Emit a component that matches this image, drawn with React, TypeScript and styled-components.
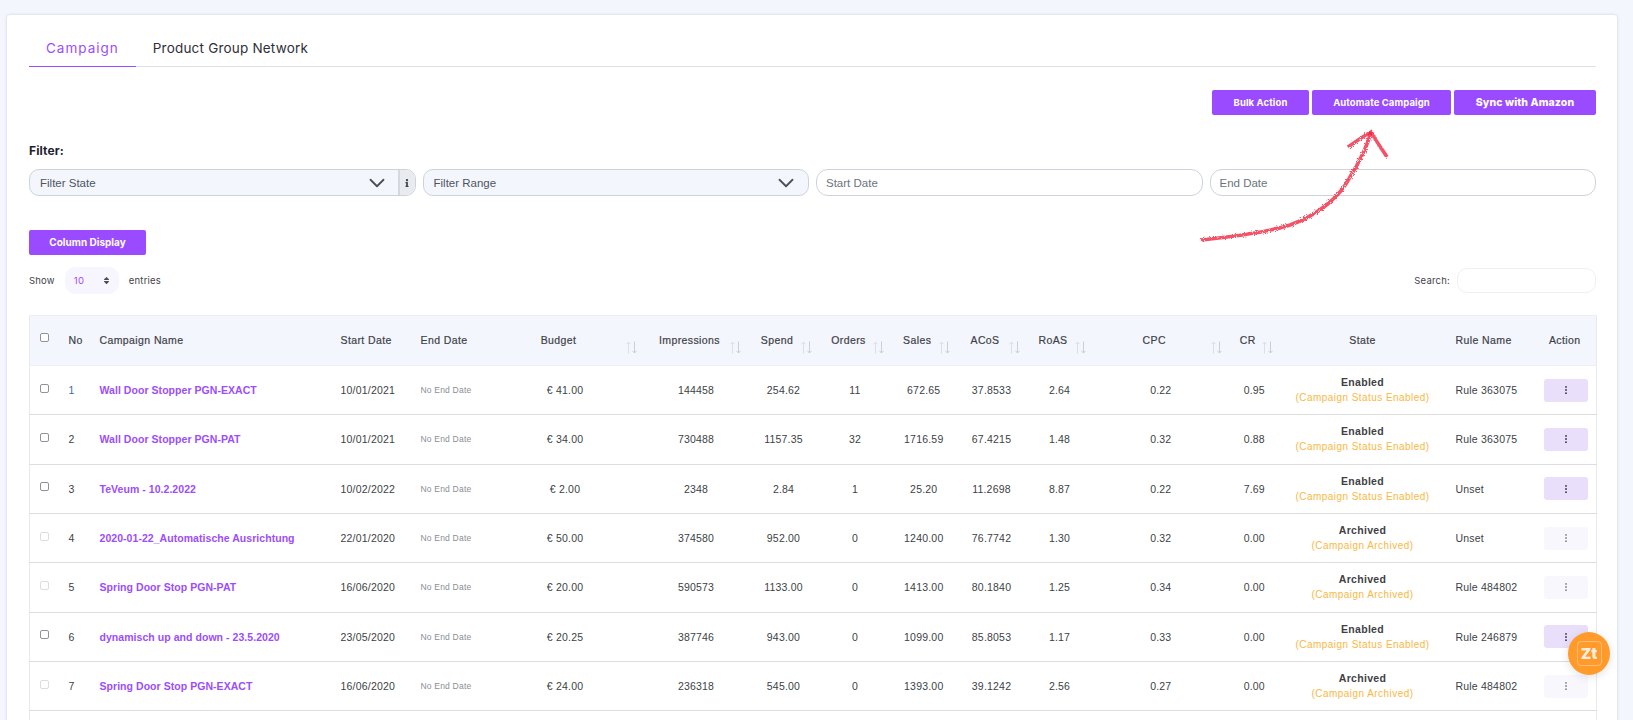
import styled, { createGlobalStyle } from 'styled-components';
import { ChevronDown } from 'lucide-react';
import { FaInfo, FaSort } from 'react-icons/fa';
import { BsThreeDotsVertical } from 'react-icons/bs';

const GlobalStyle = createGlobalStyle`
	html, body {
		margin: 0;
		height: 720px;
		overflow: hidden;
		background: #f4f6fe;
		font-family: 'Inter', 'Liberation Sans', sans-serif;
		color: #3b3f46;
	}
`;

type Campaign = {
	no: number;
	name: string;
	start: string;
	budget: string;
	impressions: string;
	spend: string;
	orders: string;
	sales: string;
	acos: string;
	roas: string;
	cpc: string;
	cr: string;
	archived: boolean;
	rule: string;
};

const campaigns: Campaign[] = [
	{ no: 1, name: 'Wall Door Stopper PGN-EXACT', start: '10/01/2021', budget: '€ 41.00', impressions: '144458', spend: '254.62', orders: '11', sales: '672.65', acos: '37.8533', roas: '2.64', cpc: '0.22', cr: '0.95', archived: false, rule: 'Rule 363075' },
	{ no: 2, name: 'Wall Door Stopper PGN-PAT', start: '10/01/2021', budget: '€ 34.00', impressions: '730488', spend: '1157.35', orders: '32', sales: '1716.59', acos: '67.4215', roas: '1.48', cpc: '0.32', cr: '0.88', archived: false, rule: 'Rule 363075' },
	{ no: 3, name: 'TeVeum - 10.2.2022', start: '10/02/2022', budget: '€ 2.00', impressions: '2348', spend: '2.84', orders: '1', sales: '25.20', acos: '11.2698', roas: '8.87', cpc: '0.22', cr: '7.69', archived: false, rule: 'Unset' },
	{ no: 4, name: '2020-01-22_Automatische Ausrichtung', start: '22/01/2020', budget: '€ 50.00', impressions: '374580', spend: '952.00', orders: '0', sales: '1240.00', acos: '76.7742', roas: '1.30', cpc: '0.32', cr: '0.00', archived: true, rule: 'Unset' },
	{ no: 5, name: 'Spring Door Stop PGN-PAT', start: '16/06/2020', budget: '€ 20.00', impressions: '590573', spend: '1133.00', orders: '0', sales: '1413.00', acos: '80.1840', roas: '1.25', cpc: '0.34', cr: '0.00', archived: true, rule: 'Rule 484802' },
	{ no: 6, name: 'dynamisch up and down - 23.5.2020', start: '23/05/2020', budget: '€ 20.25', impressions: '387746', spend: '943.00', orders: '0', sales: '1099.00', acos: '85.8053', roas: '1.17', cpc: '0.33', cr: '0.00', archived: false, rule: 'Rule 246879' },
	{ no: 7, name: 'Spring Door Stop PGN-EXACT', start: '16/06/2020', budget: '€ 24.00', impressions: '236318', spend: '545.00', orders: '0', sales: '1393.00', acos: '39.1242', roas: '2.56', cpc: '0.27', cr: '0.00', archived: true, rule: 'Rule 484802' },
];

const columnWidths = [29, 31, 241, 80, 75.5, 158, 104, 71, 72, 65.5, 70, 66, 136.5, 50.5, 166, 88, 63];

function SortArrows() {
	return (
		<SortIcon viewBox='0 0 11 13' aria-hidden='true'>
			<path d='M2.5 12.5V1M.5 3.2 2.5 1l2 2.2' stroke='#d9e0e8' />
			<path d='M8.5 .5V12M6.5 9.8 8.5 12l2-2.2' stroke='#c9ced8' />
		</SortIcon>
	);
}

export default function App() {
	return (
		<>
			<GlobalStyle />
			<Page>
				<Card>
					<Tabs>
						<Tab $active>Campaign</Tab>
						<Tab>Product Group Network</Tab>
					</Tabs>

					<ActionBar>
						<ActionButton $width={97}>Bulk Action</ActionButton>
						<ActionButton $width={139}>Automate Campaign</ActionButton>
						<ActionButton $width={142} $heavy>
							Sync with Amazon
						</ActionButton>
					</ActionBar>

					<FilterLabel>Filter:</FilterLabel>
					<FilterGrid>
						<SelectBox>
							<span>Filter State</span>
							<ChevronDown size={26} strokeWidth={1.7} color='#4b4f5c' />
							<InfoAddon>
								<FaInfo size={8} />
							</InfoAddon>
						</SelectBox>
						<SelectBox $tail>
							<span>Filter Range</span>
							<ChevronDown size={26} strokeWidth={1.7} color='#4b4f5c' />
						</SelectBox>
						<DateInput placeholder='Start Date' />
						<DateInput placeholder='End Date' />
					</FilterGrid>

					<ColumnButton>Column Display</ColumnButton>

					<ListControls>
						<LengthControl>
							Show
							<LengthSelect>
								10
								<FaSort size={9} color='#4b4f5c' />
							</LengthSelect>
							entries
						</LengthControl>
						<SearchControl>
							Search:
							<SearchInput />
						</SearchControl>
					</ListControls>

					<Table>
						<colgroup>
							{columnWidths.map((w, idx) => (
								<col key={idx} style={{ width: w }} />
							))}
						</colgroup>
						<thead>
							<tr>
								<Th $align='center'>
									<Check />
								</Th>
								<Th>No</Th>
								<Th>Campaign Name</Th>
								<Th>Start Date</Th>
								<Th>End Date</Th>
								{['Budget', 'Impressions', 'Spend', 'Orders', 'Sales', 'ACoS', 'RoAS', 'CPC', 'CR'].map((h) => (
									<Th key={h} $align='center' $sortable>
										{h}
										<SortArrows />
									</Th>
								))}
								<Th $align='center'>State</Th>
								<Th>Rule Name</Th>
								<Th $align='center'>Action</Th>
							</tr>
						</thead>
						<tbody>
							{campaigns.map((c) => (
								<tr key={c.no}>
									<Td $align='center'>
										<Check disabled={c.archived} />
									</Td>
									<Td $color={c.no === 1 ? '#3a6ea5' : undefined}>{c.no}</Td>
									<NameCell>{c.name}</NameCell>
									<Td>{c.start}</Td>
									<NoEndDate>No End Date</NoEndDate>
									<Td $align='center'>{c.budget}</Td>
									<Td $align='center'>{c.impressions}</Td>
									<Td $align='center'>{c.spend}</Td>
									<Td $align='center'>{c.orders}</Td>
									<Td $align='center'>{c.sales}</Td>
									<Td $align='center'>{c.acos}</Td>
									<Td $align='center'>{c.roas}</Td>
									<Td $align='center'>{c.cpc}</Td>
									<Td $align='center'>{c.cr}</Td>
									<Td $align='center'>
										<StateName>{c.archived ? 'Archived' : 'Enabled'}</StateName>
										<StateNote>{c.archived ? '(Campaign Archived)' : '(Campaign Status Enabled)'}</StateNote>
									</Td>
									<Td>{c.rule}</Td>
									<Td $align='center'>
										<RowMenu $muted={c.archived}>
											<BsThreeDotsVertical size={10} />
										</RowMenu>
									</Td>
								</tr>
							))}
							<tr>
								<Td colSpan={17} />
							</tr>
						</tbody>
					</Table>

					<Annotation viewBox='0 0 220 130' aria-hidden='true'>
						<defs>
							<filter id='rough' x='-10%' y='-10%' width='120%' height='120%'>
								<feTurbulence type='fractalNoise' baseFrequency='0.9' numOctaves='2' seed='4' />
								<feDisplacementMap in='SourceGraphic' scale='3.5' />
							</filter>
						</defs>
						<g filter='url(#rough)' fill='none' stroke='#f0203c' strokeWidth='3.6' strokeOpacity='.78' strokeLinecap='butt'>
							<path d='M11 115C40 112 75 108 100 100C128 90 150 72 160 52C170 36 177 22 181 7' />
							<path d='M158 22C165 17 174 11 181 7C186 16 192 24 197 32' />
						</g>
					</Annotation>
				</Card>
			</Page>
			<ChatBubble>
				<ChatMark>Zt</ChatMark>
			</ChatBubble>
		</>
	);
}

const Page = styled.div`
	padding: 15px 16px 0 7px;
`;

const Card = styled.main`
	position: relative;
	background: #fff;
	padding: 0 21px 0 22px;
	border-radius: 3px 3px 0 0;
	box-shadow: 0 0 3px rgba(120, 125, 170, 0.35);
`;

const Tabs = styled.nav`
	display: flex;
	height: 52px;
	box-sizing: border-box;
	border-bottom: 1px solid #e2e2e6;
`;

const Tab = styled.div<{ $active?: boolean }>`
	display: flex;
	align-items: center;
	height: 52px;
	padding: 14px 17px 0;
	box-sizing: border-box;
	font-family: 'Inter', sans-serif;
	font-size: 13.5px;
	font-weight: 400;
	letter-spacing: ${(p) => (p.$active ? 1 : 0.2)}px;
	color: ${(p) => (p.$active ? '#9b4dff' : '#2f2f3a')};
	border-bottom: ${(p) => (p.$active ? '1.5px solid #9b4dff' : 'none')};
`;

const ActionBar = styled.div`
	display: flex;
	justify-content: flex-end;
	gap: 3px;
	margin-top: 23px;
`;

const ActionButton = styled.button<{ $width: number; $heavy?: boolean }>`
	width: ${(p) => p.$width}px;
	height: 25px;
	border: 0;
	border-radius: 2px;
	background: #9a4bff;
	color: #fff;
	font-family: 'Inter', sans-serif;
	font-size: ${(p) => (p.$heavy ? 10.5 : 9.5)}px;
	font-weight: ${(p) => (p.$heavy ? 800 : 700)};
	letter-spacing: 0.1px;
`;

const FilterLabel = styled.div`
	margin-top: 27px;
	height: 17px;
	line-height: 17px;
	font-size: 12px;
	font-weight: 700;
	letter-spacing: 0.1px;
	color: #1d2330;
`;

const FilterGrid = styled.div`
	display: grid;
	grid-template-columns: repeat(4, 1fr);
	gap: 7px;
	margin-top: 10px;
`;

const SelectBox = styled.div<{ $tail?: boolean }>`
	display: flex;
	align-items: center;
	justify-content: space-between;
	height: 27px;
	box-sizing: border-box;
	padding: 0 ${(p) => (p.$tail ? 9 : 0)}px 0 10px;
	border: 1px solid #cdd2dc;
	border-radius: 10px;
	background: #f4f6fe;
	overflow: hidden;
	font-family: 'Liberation Sans', sans-serif;
	font-size: 11.5px;
	color: #4f5560;

	& > svg {
		margin-left: auto;
		margin-right: ${(p) => (p.$tail ? 0 : 8)}px;
	}
`;

const InfoAddon = styled.div`
	display: flex;
	align-items: center;
	justify-content: center;
	width: 17px;
	height: 100%;
	box-sizing: border-box;
	border-left: 2px solid #d5d8de;
	background: #e9ecef;
	color: #3f4650;
`;

const DateInput = styled.input`
	height: 27px;
	min-width: 0;
	box-sizing: border-box;
	padding: 0 9px;
	border: 1px solid #cdd2dc;
	border-radius: 12px;
	outline: none;
	background: #fff;
	font-family: 'Liberation Sans', sans-serif;
	font-size: 11.5px;

	&::placeholder {
		color: #6c757d;
		opacity: 1;
	}
`;

const ColumnButton = styled.button`
	display: block;
	width: 117px;
	height: 25px;
	margin-top: 34px;
	padding: 0 0 2px;
	border: 0;
	border-radius: 2px;
	background: #9a4bff;
	color: #fff;
	font-family: 'Inter', sans-serif;
	font-size: 10px;
	font-weight: 700;
`;

const ListControls = styled.div`
	display: flex;
	justify-content: space-between;
	align-items: center;
	margin-top: 12px;
	height: 27px;
	font-size: 9.5px;
	letter-spacing: 0.2px;
	color: #3f434b;
`;

const LengthControl = styled.label`
	display: flex;
	align-items: center;
	gap: 10px;
`;

const LengthSelect = styled.div`
	display: flex;
	align-items: center;
	justify-content: space-between;
	width: 54px;
	height: 27px;
	box-sizing: border-box;
	padding: 0 8px 0 9px;
	border-radius: 10px;
	background: #f7f5fe;
	color: #9b4dff;
`;

const SearchControl = styled.label`
	display: flex;
	align-items: center;
	gap: 7px;
`;

const SearchInput = styled.input`
	width: 139px;
	height: 25px;
	box-sizing: border-box;
	border: 1px solid #eef0f5;
	border-radius: 10px;
	outline: none;
`;

const Table = styled.table`
	width: 1567px;
	margin-top: 21px;
	table-layout: fixed;
	border-collapse: collapse;
	border-left: 1px solid #e8e9f0;
	border-right: 1px solid #e8e9f0;
	font-family: 'Liberation Sans', sans-serif;
`;

const Th = styled.th<{ $align?: string; $sortable?: boolean }>`
	position: relative;
	height: 50px;
	box-sizing: border-box;
	padding: 0 ${(p) => (p.$sortable ? 23 : 10)}px 2px 10px;
	background: #f4f6fe;
	border-top: 1px solid #eceef4;
	border-bottom: 1px solid #eceef4;
	text-align: ${(p) => p.$align ?? 'left'};
	font-size: 10.5px;
	font-weight: 400;
	letter-spacing: 0.4px;
	white-space: nowrap;
	color: #3e4248;
	-webkit-text-stroke: 0.2px #3e4248;
`;

const SortIcon = styled.svg`
	position: absolute;
	right: 7px;
	bottom: 11px;
	width: 11px;
	height: 13px;
	fill: none;
	stroke-width: 1;
`;

const Td = styled.td<{ $align?: string; $color?: string }>`
	height: 49.33px;
	box-sizing: border-box;
	padding: 0 10px;
	border-bottom: 1px solid #dedede;
	text-align: ${(p) => p.$align ?? 'left'};
	font-size: 10.5px;
	letter-spacing: 0.2px;
	white-space: nowrap;
	color: ${(p) => p.$color ?? '#3b3f46'};
`;

const NameCell = styled(Td)`
	font-weight: 700;
	letter-spacing: 0.05px;
	color: #9b4dff;
`;

const NoEndDate = styled(Td)`
	font-size: 8.5px;
	color: #8a8e96;
`;

const Check = styled.input.attrs({ type: 'checkbox' })`
	appearance: none;
	display: block;
	width: 9px;
	height: 9px;
	margin: -4px auto 0;
	border: 1px solid #8f9299;
	border-radius: 2px;
	background: #fff;

	&:disabled {
		border-color: #dcdde0;
	}
`;

const StateName = styled.div`
	font-weight: 700;
	font-size: 10.5px;
	letter-spacing: 0.3px;
	color: #3f3f46;
	line-height: 15px;
`;

const StateNote = styled.div`
	font-size: 10px;
	letter-spacing: 0.45px;
	color: #fbb83f;
	line-height: 15px;
`;

const RowMenu = styled.button<{ $muted?: boolean }>`
	display: flex;
	align-items: center;
	justify-content: center;
	width: 44px;
	height: 23px;
	margin: 0 auto;
	padding: 0;
	border: 0;
	border-radius: 3px;
	background: ${(p) => (p.$muted ? '#f8f7fd' : '#e9dffb')};
	color: ${(p) => (p.$muted ? '#85858f' : '#3c3650')};
`;

const Annotation = styled.svg`
	position: absolute;
	left: 1183px;
	top: 110px;
	width: 220px;
	height: 130px;
	pointer-events: none;
`;

const ChatBubble = styled.div`
	position: fixed;
	left: 1568px;
	top: 632px;
	display: flex;
	align-items: center;
	justify-content: center;
	width: 42px;
	height: 43px;
	border-radius: 50%;
	background: #ff9a2b;
	box-shadow: 0 2px 10px rgba(0, 0, 0, 0.12);
`;

const ChatMark = styled.div`
	display: flex;
	align-items: center;
	justify-content: center;
	width: 25px;
	height: 25px;
	box-sizing: border-box;
	border: 1px solid rgba(255, 255, 255, 0.35);
	border-radius: 4px;
	font-size: 15px;
	font-weight: 900;
	color: #ffeedd;
`;
